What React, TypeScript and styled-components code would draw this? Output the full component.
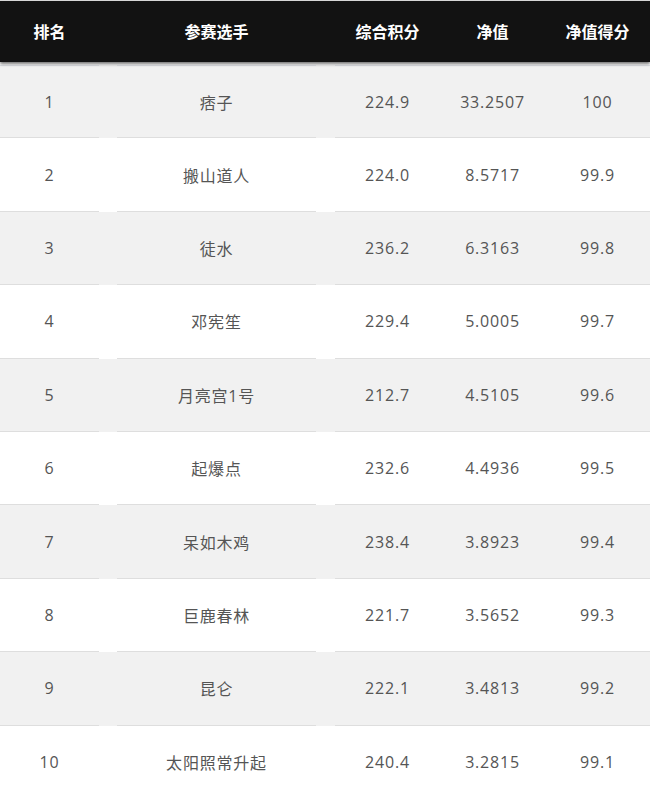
import React from "react";
import styled, { createGlobalStyle } from "styled-components";

const GlobalStyle = createGlobalStyle`
  html, body {
    margin: 0;
    padding: 0;
    background: #fff;
  }
  body {
    font-family: "Open Sans", "Noto Sans CJK SC", "Noto Sans", sans-serif;
  }
`;

const Table = styled.div`
  width: 650px;
  overflow: hidden;
`;

const Header = styled.div`
  position: relative;
  z-index: 1;
  display: flex;
  height: 61px;
  border-top: 1px solid #d6d6d6;
  background: #121212;
  box-shadow: 0 2px 3px rgba(0, 0, 0, 0.55);
`;

interface ICellProps {
  $width?: number;
  $gap?: number;
}

const HeadCell = styled.div<ICellProps>`
  flex: ${props => (props.$width ? `0 0 ${props.$width}px` : "1 1 0")};
  margin-left: ${props => props.$gap || 0}px;
  display: flex;
  align-items: center;
  justify-content: center;
  color: #fff;
  font-family: "Noto Sans CJK SC", sans-serif;
  font-size: 16px;
  font-weight: 700;
  padding-bottom: 1px;
`;

const Body = styled.div`
  margin-top: 3px;
`;

const Row = styled.div<{ $odd: boolean }>`
  display: flex;
  height: 73.4px;
  background: ${props => (props.$odd ? "#f1f1f1" : "#fff")};

  &:first-child > div {
    border-top: 1px solid #dfe2e7;
  }
`;

const Cell = styled.div<ICellProps>`
  box-sizing: border-box;
  flex: ${props => (props.$width ? `0 0 ${props.$width}px` : "1 1 0")};
  margin-left: ${props => props.$gap || 0}px;
  display: flex;
  align-items: center;
  justify-content: center;
  border-bottom: 1px solid #dedede;
  color: #555;
  font-size: 16px;
  font-weight: 400;
  letter-spacing: 0.8px;
`;

const columns: ICellProps[] = [
  { $width: 99 },
  { $width: 199, $gap: 18 },
  { $gap: 19 },
  {},
  {}
];

const heads = ["排名", "参赛选手", "综合积分", "净值", "净值得分"];

const rows = [
  ["1", "痞子", "224.9", "33.2507", "100"],
  ["2", "搬山道人", "224.0", "8.5717", "99.9"],
  ["3", "徒水", "236.2", "6.3163", "99.8"],
  ["4", "邓宪笙", "229.4", "5.0005", "99.7"],
  ["5", "月亮宫1号", "212.7", "4.5105", "99.6"],
  ["6", "起爆点", "232.6", "4.4936", "99.5"],
  ["7", "呆如木鸡", "238.4", "3.8923", "99.4"],
  ["8", "巨鹿春林", "221.7", "3.5652", "99.3"],
  ["9", "昆仑", "222.1", "3.4813", "99.2"],
  ["10", "太阳照常升起", "240.4", "3.2815", "99.1"]
];

const App: React.FC = () => (
  <>
    <GlobalStyle />
    <Table>
      <Header>
        {heads.map((title, i) => (
          <HeadCell key={title} {...columns[i]}>
            {title}
          </HeadCell>
        ))}
      </Header>
      <Body>
        {rows.map((row, r) => (
          <Row key={row[0]} $odd={r % 2 === 0}>
            {row.map((val, i) => (
              <Cell key={i} {...columns[i]}>
                {val}
              </Cell>
            ))}
          </Row>
        ))}
      </Body>
    </Table>
  </>
);

export default App;
